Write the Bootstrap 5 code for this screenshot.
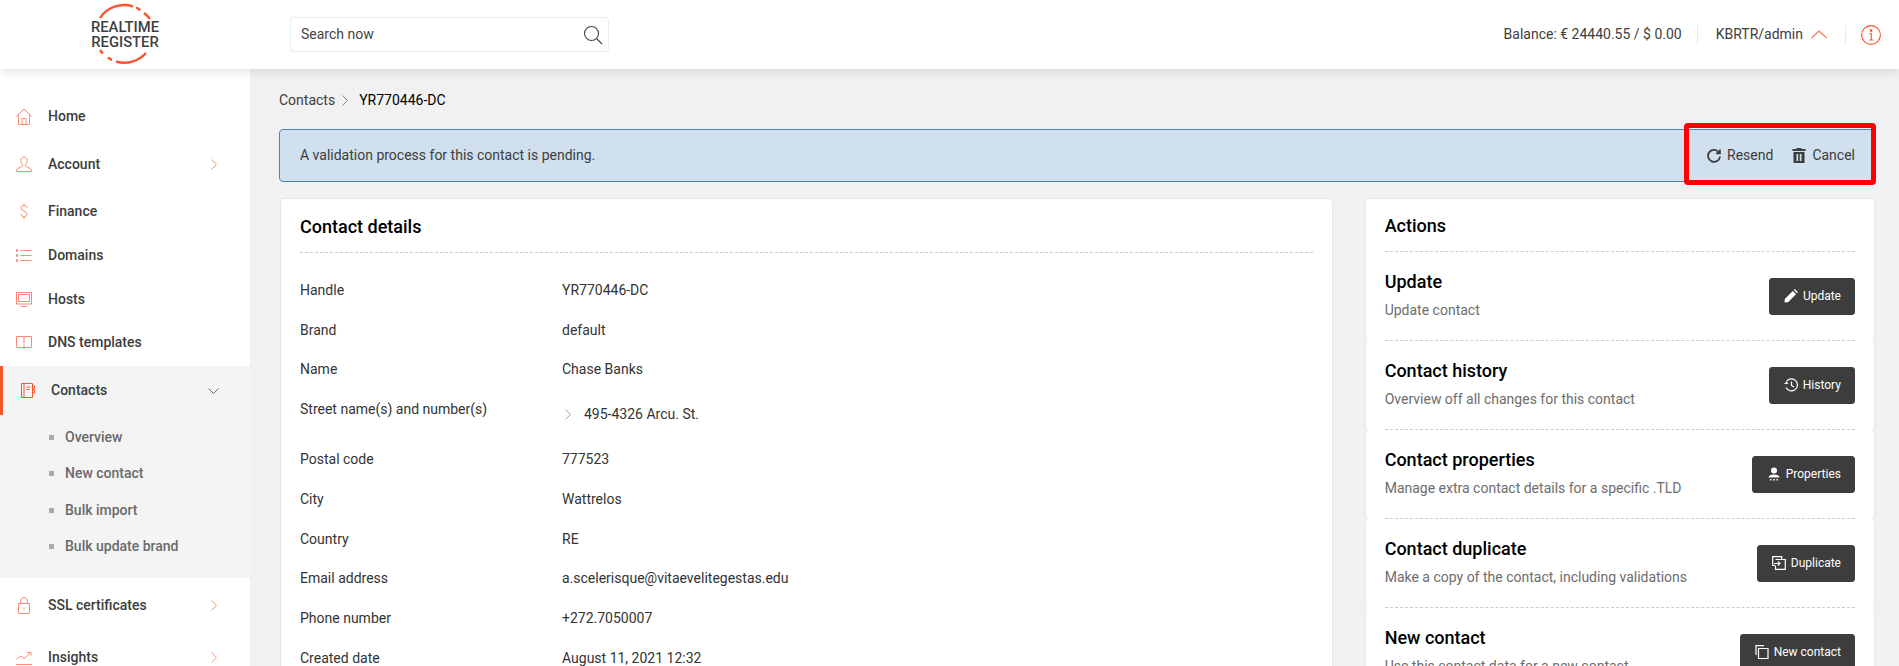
<!DOCTYPE html>
<html lang="en">
<head>
<meta charset="utf-8">
<title>Contact YR770446-DC</title>
<link href="https://cdn.jsdelivr.net/npm/bootstrap@5.3.0/dist/css/bootstrap.min.css" rel="stylesheet">
<style>
html,body{height:100%;}
body{font-family:Roboto,"Liberation Sans",sans-serif;font-size:14px;line-height:21px;color:#3d3d3d;background:#f1f1f1;overflow:hidden;}
svg{display:block;flex:none;}
.rr-top{height:69px;background:#fff;box-shadow:0 2px 10px rgba(0,0,0,.12);position:relative;z-index:3;}
.rr-brand{width:250px;}
.rr-brand text{font-family:Roboto,sans-serif;font-weight:500;font-size:14.800px;fill:#3f3f3f;text-anchor:middle;}
.rr-search{width:319px;height:35px;margin-left:40px;padding:0 5px 0 10px;background:#fff;border:1px solid #eee;border-radius:4px;box-shadow:0 0 2px rgba(0,0,0,.06);color:#444;}
.rr-sep{width:1px;height:20px;background:#eaeaea;}
.rr-bal{margin-right:15px;}
.rr-user{margin:0 18px;gap:8px;}
.rr-info{margin:0 18px 0 15px;}
.rr-body{height:calc(100% - 69px);}
.rr-side{width:250px;flex:none;background:#fff;padding-top:24px;overflow:hidden;}
.rr-link{display:flex;align-items:center;height:47px;padding-left:16px;padding-right:33px;color:#3d3d3d;font-weight:500;text-decoration:none;}
.rr-link.rr-short{height:43.500px;}
.rr-link.rr-drop{margin-top:1px;}
.rr-link.rr-tight{margin-top:-1px;}
.rr-link .rr-lab{margin-left:16px;flex:1;}
.rr-ico{width:16px;height:17px;fill:none;stroke:#fb8c76;stroke-width:1;}
.rr-chev{width:6px;height:11px;fill:none;stroke:#fb8c76;stroke-width:1;}
.rr-open{background:#f4f4f4;padding-bottom:13px;margin-top:1.500px;}
.rr-open .rr-link{height:49px;border-left:3px solid #f5562f;padding-left:17px;padding-right:31px;}
.rr-open .rr-lab{margin-left:15px;}
.rr-down{width:11px;height:6px;fill:none;stroke:#666;stroke-width:1;}
.rr-sub{display:flex;align-items:center;height:36.500px;padding-left:49px;color:#6a6a6a;font-weight:500;text-decoration:none;}
.rr-sub::before{content:"";width:5px;height:5px;background:#aaa;margin-right:11px;}
.rr-subs{padding-top:4px;}
.rr-link.rr-ssl{height:55px;}
.rr-link.rr-last{height:49px;}
.rr-main{flex:1;min-width:0;padding:21px 24px 0 30px;overflow:hidden;}
.rr-crumb{margin-bottom:18px;gap:7px;margin-left:-1px;}
.rr-crumb b{font-weight:400;color:#000;margin-left:4px;}
.rr-chev-g{width:6px;height:11px;fill:none;stroke:#888;stroke-width:1;}
.rr-alert{position:relative;height:53px;margin:0 1px 16px -1px;padding:0 18px 0 20px;background:#d0e0ef;border:1px solid #4a86c5;border-radius:4px;color:#3d3d3d;}
.rr-alert-act{gap:19px;}
.rr-alert-act span{display:flex;align-items:center;gap:6px;}
.rr-red{position:absolute;top:-7px;bottom:-4px;right:-3px;width:192px;border:5px solid #f00;border-radius:4px;pointer-events:none;}
.rr-grid{--bs-gutter-x:32px;}
.rr-card{background:#fff;border:1px solid #e6e6e6;border-radius:4px;}
.rr-mid{border-top:0;border-bottom:0;}
.rr-pad{padding:0 19px;}
.rr-h{font-size:18px;line-height:24px;font-weight:500;color:#000;margin:0;}
.rr-head{height:53px;padding-top:1px;border-bottom:1px dashed #ccc;display:flex;align-items:center;}
.rr-head.rr-h-l{height:54px;padding-top:2px;}
.rr-tbl{width:100%;margin-top:17.500px;border-collapse:collapse;}
.rr-tbl td{height:39.700px;padding:0;vertical-align:middle;color:#333;}
.rr-tbl td:first-child{width:262px;}
.rr-tbl tr.rr-st td{height:50.500px;vertical-align:top;padding-top:9px;}
.rr-tbl tr.rr-st td:last-child{padding-top:14px;}
.rr-val{gap:13px;margin-left:3px;}
.rr-act{height:89px;border-bottom:1px dashed #ccc;}
.rr-txt{padding-bottom:2px;}
.rr-act p{margin:6px 0 0;color:#6d6d6d;}
.rr-btn{--bs-btn-bg:#3d3d3d;--bs-btn-border-color:#3d3d3d;--bs-btn-color:#fff;--bs-btn-hover-bg:#3d3d3d;--bs-btn-hover-color:#fff;--bs-btn-hover-border-color:#3d3d3d;height:37px;display:flex;align-items:center;gap:5px;padding:0 13px 0 14px;font-size:12px;border-radius:3px;white-space:nowrap;}
.rr-bi{width:14px;height:14px;fill:#fff;}
.rr-bis{width:14px;height:14px;fill:none;stroke:#fff;stroke-width:1.200;}
</style>
</head>
<body>
<header class="rr-top d-flex align-items-center">
  <div class="rr-brand d-flex justify-content-center">
    <svg width="72" height="69" viewBox="0 0 72 69">
      <g fill="none" stroke="#f5562f" stroke-width="2.400">
        <path d="M11 18A29 29 0 0 1 44 6.500"/>
        <path d="M48 8A29 29 0 0 1 50.500 9.500" stroke-linecap="round"/>
        <path d="M55 13A29 29 0 0 1 61 19"/>
        <path d="M11 50A29 29 0 0 0 14 53.500"/>
        <path d="M19 57.500A29 29 0 0 0 23 60"/>
        <path d="M27 61.500A29 29 0 0 0 57 53"/>
      </g>
      <text x="36" y="32">REALTIME</text>
      <text x="36" y="47">REGISTER</text>
    </svg>
  </div>
  <div class="rr-search d-flex align-items-center justify-content-between">
    <span>Search now</span>
    <svg width="20" height="20" viewBox="0 0 20 20" fill="none" stroke="#444" stroke-width="1.100"><circle cx="8.500" cy="8.500" r="7"/><path d="M13.500 13.500 19 19"/></svg>
  </div>
  <div class="ms-auto d-flex align-items-center">
    <span class="rr-bal">Balance: € 24440.55 / $ 0.00</span>
    <span class="rr-sep"></span>
    <span class="rr-user d-flex align-items-center">KBRTR/admin
      <svg width="16" height="9" viewBox="0 0 16 9" fill="none" stroke="#f5734f" stroke-width="1.100"><path d="M.5 8 8 1l7.500 7"/></svg>
    </span>
    <span class="rr-sep"></span>
    <svg class="rr-info" width="20" height="20" viewBox="0 0 20 20" fill="none" stroke="#f5562f" stroke-width="1.100"><circle cx="10" cy="10" r="9.400"/><path d="M8.500 8.500H10.300V15M8.300 15H12.200M9.500 4.800h1.300v1.400H9.500z"/></svg>
  </div>
</header>
<div class="rr-body d-flex">
  <aside class="rr-side">
    <nav>
      <a class="rr-link" href="#"><svg class="rr-ico" viewBox="0 0 16 17"><path d="M.5 8.500 8 1l7.500 7.500M2.500 7v9.500h11V7M6 16.500v-6h4v6"/></svg><span class="rr-lab">Home</span></a>
      <a class="rr-link rr-drop" href="#"><svg class="rr-ico" viewBox="0 0 16 17"><path d="M8 1C6 1 4.800 2.600 4.800 4.600c0 1.600.7 3 1.700 3.800V10L1 13c-.5.300-.5 1.500-.5 2.500h15c0-1 0-2.200-.5-2.500L9.500 10V8.400c1-.8 1.700-2.200 1.700-3.800C11.200 2.600 10 1 8 1z"/></svg><span class="rr-lab">Account</span><svg class="rr-chev" viewBox="0 0 6 11"><path d="m.5.500 5 5-5 5"/></svg></a>
      <a class="rr-link" href="#"><svg class="rr-ico" viewBox="0 0 16 17"><path d="M11 5C11 3.500 9.700 2.500 8 2.500S5 3.500 5 5s1.300 2.200 3 3 3 1.700 3 3.200-1.300 2.500-3 2.500-3-1-3-2.500M8 .5v2M8 13.700v2.800"/></svg><span class="rr-lab">Finance</span></a>
      <a class="rr-link rr-short rr-tight" href="#"><svg class="rr-ico" viewBox="0 0 16 17"><path d="M4.500 3.500h11M4.500 8.500h11M4.500 13.500h11"/><path stroke-width="2.400" d="M0 3.500h2M0 8.500h2M0 13.500h2"/></svg><span class="rr-lab">Domains</span></a>
      <a class="rr-link rr-short" href="#"><svg class="rr-ico" viewBox="0 0 16 17"><rect x=".5" y="1.500" width="15" height="11.500"/><rect x="2.500" y="3.500" width="11" height="7"/><path d="M5 15.500h6"/></svg><span class="rr-lab">Hosts</span></a>
      <a class="rr-link rr-short" href="#"><svg class="rr-ico" viewBox="0 0 16 17"><path d="M.5 2.500h15v11H.5zM8 2.500v12.500"/></svg><span class="rr-lab">DNS templates</span></a>
      <div class="rr-open">
        <a class="rr-link" href="#"><svg class="rr-ico" viewBox="0 0 14 17"><path d="M.5 1.500h11v14H.5zM3 1.500v14M5.500 5h4M5.500 7.500h3M11.500 4h2v3h-2M11.500 8h2v3h-2" stroke="#f5562f"/></svg><span class="rr-lab">Contacts</span><svg class="rr-down" viewBox="0 0 11 6"><path d="m.5.500 5 5 5-5"/></svg></a>
        <div class="rr-subs">
          <a class="rr-sub" href="#">Overview</a>
          <a class="rr-sub" href="#">New contact</a>
          <a class="rr-sub" href="#">Bulk import</a>
          <a class="rr-sub" href="#">Bulk update brand</a>
        </div>
      </div>
      <a class="rr-link rr-ssl" href="#"><svg class="rr-ico" viewBox="0 0 16 17"><path d="M2.500 6.500h11v10h-11zM4.500 6.500V4a3.500 3.500 0 0 1 7 0v2.500M8 10.500v2"/></svg><span class="rr-lab">SSL certificates</span><svg class="rr-chev" viewBox="0 0 6 11"><path d="m.5.500 5 5-5 5"/></svg></a>
      <a class="rr-link rr-last" href="#"><svg class="rr-ico" viewBox="0 0 16 17"><path d="M.5 10 5 7l3 2.500L14.500 4M11 3.500h4v3M0 15.500h16"/></svg><span class="rr-lab">Insights</span><svg class="rr-chev" viewBox="0 0 6 11"><path d="m.5.500 5 5-5 5"/></svg></a>
    </nav>
  </aside>
  <main class="rr-main">
    <div class="rr-crumb d-flex align-items-center">
      <span>Contacts</span>
      <svg class="rr-chev-g" viewBox="0 0 6 11"><path d="m.5.500 5 5-5 5"/></svg>
      <b>YR770446-DC</b>
    </div>
    <div class="rr-alert d-flex align-items-center justify-content-between">
      <span>A validation process for this contact is pending.</span>
      <div class="rr-alert-act d-flex">
        <span><svg width="14" height="14" viewBox="0 0 14 14" fill="none" stroke="#3d3d3d" stroke-width="1.800"><path d="M12 3.500A6 6 0 1 0 13 7.500"/><path d="M13 .5V4.500H9" stroke-width="1.600" fill="#3d3d3d"/></svg>Resend</span>
        <span><svg width="14" height="15" viewBox="0 0 14 15"><path fill="#3d3d3d" d="M5 0h4l1 1h3.500v2H.5V1H4zM1.500 4h11v11h-11z"/><path fill="#d0e0ef" d="M4.500 6h1.700v7H4.500zM7.800 6h1.700v7H7.800z"/></svg>Cancel</span>
      </div>
      <div class="rr-red"></div>
    </div>
    <div class="row rr-grid">
      <div class="col-8">
        <section class="rr-card rr-pad" style="min-height:600px">
          <h2 class="rr-h rr-head rr-h-l">Contact details</h2>
          <table class="rr-tbl">
            <tr><td>Handle</td><td>YR770446-DC</td></tr>
            <tr><td>Brand</td><td>default</td></tr>
            <tr><td>Name</td><td>Chase Banks</td></tr>
            <tr class="rr-st"><td>Street name(s) and number(s)</td><td><div class="rr-val d-flex align-items-center"><svg width="6" height="11" viewBox="0 0 6 11" fill="none" stroke="#8fb39a"><path d="m.5.500 5 5-5 5"/></svg>495-4326 Arcu. St.</div></td></tr>
            <tr><td>Postal code</td><td>777523</td></tr>
            <tr><td>City</td><td>Wattrelos</td></tr>
            <tr><td>Country</td><td>RE</td></tr>
            <tr><td>Email address</td><td>a.scelerisque@vitaevelitegestas.edu</td></tr>
            <tr><td>Phone number</td><td>+272.7050007</td></tr>
            <tr><td>Created date</td><td>August 11, 2021 12:32</td></tr>
          </table>
        </section>
      </div>
      <div class="col-4">
        <section class="rr-card rr-pad border-bottom-0">
          <h2 class="rr-h rr-head">Actions</h2>
          <div class="rr-act d-flex align-items-center justify-content-between">
            <div class="rr-txt"><h3 class="rr-h">Update</h3><p>Update contact</p></div>
            <button class="btn rr-btn" type="button"><svg class="rr-bi" viewBox="0 0 14 14"><path d="M.5 13.500.8 10 8.800 2l3.200 3.200-8 8zM9.800 1l1-1L14 3.200l-1 1z"/></svg>Update</button>
          </div>
        </section>
        <section class="rr-card rr-mid rr-pad">
          <div class="rr-act d-flex align-items-center justify-content-between">
            <div class="rr-txt"><h3 class="rr-h">Contact history</h3><p>Overview off all changes for this contact</p></div>
            <button class="btn rr-btn" type="button"><svg class="rr-bis" viewBox="0 0 14 14"><path d="M2.500 3.500A6 6 0 1 1 2 9.500M7.500 3.500V7.500l2.500 1.500"/><path d="M0 6h4.500L2.500 3.500z" fill="#fff" stroke="none"/></svg>History</button>
          </div>
        </section>
        <section class="rr-card rr-mid rr-pad">
          <div class="rr-act d-flex align-items-center justify-content-between">
            <div class="rr-txt"><h3 class="rr-h">Contact properties</h3><p>Manage extra contact details for a specific .TLD</p></div>
            <button class="btn rr-btn" type="button"><svg class="rr-bi" viewBox="0 0 14 14"><circle cx="7" cy="3.500" r="3"/><path d="M1.500 10.500c0-2 2.500-3 5.500-3s5.500 1 5.500 3zM3 12h1.500v1.500H3zM6.300 12h1.500v1.500H6.300zM9.500 12H11v1.500H9.500z"/></svg>Properties</button>
          </div>
        </section>
        <section class="rr-card rr-mid rr-pad">
          <div class="rr-act d-flex align-items-center justify-content-between">
            <div class="rr-txt"><h3 class="rr-h">Contact duplicate</h3><p>Make a copy of the contact, including validations</p></div>
            <button class="btn rr-btn" type="button"><svg class="rr-bis" viewBox="0 0 14 14"><path d="M3 9.500H.7V.7h9V3M3.500 3.500h9.800v9.800H3.500V9.500M2 7.500h6M6 5.500l2 2-2 2"/></svg>Duplicate</button>
          </div>
        </section>
        <section class="rr-card rr-mid rr-pad">
          <div class="rr-act d-flex align-items-center justify-content-between">
            <div class="rr-txt"><h3 class="rr-h">New contact</h3><p>Use this contact data for a new contact</p></div>
            <button class="btn rr-btn" type="button"><svg class="rr-bis" viewBox="0 0 14 14"><path d="M1 10V.7h8M3.500 3.500h9.500v10H3.500z"/></svg>New contact</button>
          </div>
        </section>
      </div>
    </div>
  </main>
</div>
<script src="https://cdn.jsdelivr.net/npm/bootstrap@5.3.0/dist/js/bootstrap.bundle.min.js"></script>
</body>
</html>
